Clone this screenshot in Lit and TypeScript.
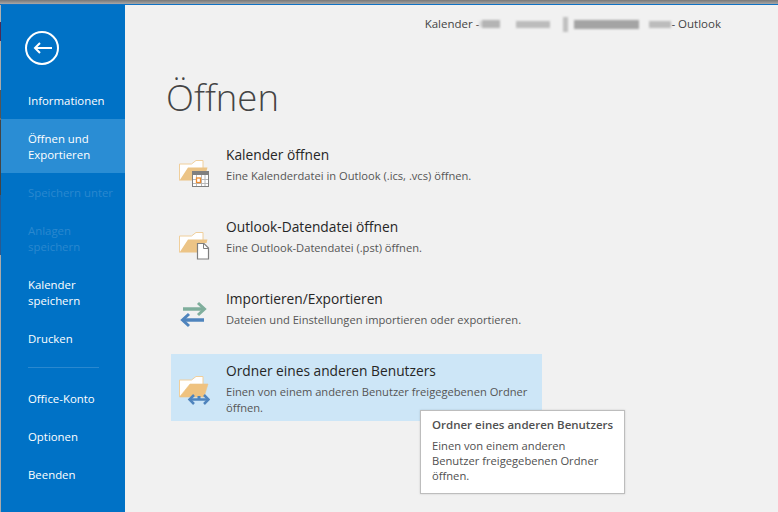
import { LitElement, html, css } from "lit";
import { customElement } from "lit/decorators.js";

const backBase = (tabRight = 25) => `M1.5 23.5V7H13.5L18 3.5H${tabRight}V11`;

const icons = {
  cal: html`<svg class="ico" viewBox="0 0 32 32" width="32" height="32">
    <path d=${backBase()} fill="#fff" stroke="#f0cf9c"/>
    <path d="M1.500 23.500L10 10.500H29.500L28.500 14H15V23.500Z" fill="#ecc486"/>
    <rect x="14.500" y="14.500" width="16" height="15" fill="#fff" stroke="#7f7f7f"/>
    <rect x="14" y="14" width="17" height="4" fill="#7f7f7f"/>
    <path d="M15 22.500H30M15 26.500H30M18.500 18V29M23.500 18V29M27 18V29" stroke="#b8b8b8" fill="none"/>
    <rect x="18.500" y="21" width="4" height="4.500" fill="#fff" stroke="#ed8b2f" stroke-width="1.300"/>
  </svg>`,
  data: html`<svg class="ico" viewBox="0 0 32 32" width="32" height="32">
    <path d=${backBase()} fill="#fff" stroke="#f0cf9c"/>
    <path d="M1.500 23.500L10 10.500H29.500L28.500 14H19V23.500Z" fill="#ecc486"/>
    <path d="M19.500 14.500H26L30.500 19V30H19.500Z" fill="#fff" stroke="#7f7f7f" stroke-width="1.200"/>
    <path d="M25.500 14.500V19.500H30.500" fill="none" stroke="#7f7f7f"/>
  </svg>`,
  imp: html`<svg class="ico" viewBox="0 0 32 32" width="32" height="32">
    <path d="M5 8H26" stroke="#7fae9c" stroke-width="3.500" fill="none"/>
    <path d="M20 2L26.500 8L20 14" stroke="#7fae9c" stroke-width="3" fill="none"/>
    <path d="M26 19H5" stroke="#4f84bd" stroke-width="3.500" fill="none"/>
    <path d="M11 13L4.500 19L11 25" stroke="#4f84bd" stroke-width="3" fill="none"/>
  </svg>`,
  share: html`<svg class="ico" viewBox="0 0 32 32" width="32" height="32">
    <path d=${backBase()} fill="#fff" stroke="#f0cf9c"/>
    <path d="M1.500 24L12 11H30L26 24Z" fill="#efc27f" stroke="#e9c488" stroke-width=".6"/>
    <rect x="19.500" y="23" width="3" height="3" fill="#4f84bd"/>
    <path d="M13 26.500H29" stroke="#4f84bd" stroke-width="2.500" fill="none"/>
    <path d="M16 22L11.500 26.500L16 31M26 22L30.500 26.500L26 31" stroke="#4f84bd" stroke-width="2.500" fill="none"/>
  </svg>`,
};

const blurSegs = [
  { w: 3, h: 6, c: "#dadada", gap: 0 },
  { w: 18, h: 8, c: "#b4b4b4", gap: 16 },
  { w: 34, h: 7, c: "#bcbcbc", gap: 13 },
  { w: 5, h: 15, c: "#c0c0c0", gap: 6 },
  { w: 65, h: 9, c: "#a4a4a4", gap: 10 },
  { w: 22, h: 7, c: "#bcbcbc", gap: 0 },
];

@customElement("app-root")
export class AppRoot extends LitElement {
  static styles = css`
    :host { display: block; width: 778px; height: 512px; overflow: hidden; font-family: "Open Sans", "Noto Sans", sans-serif; position: relative; }
    .window { display: flex; flex-direction: column; height: 512px; }
    .topedge { height: 4px; background: linear-gradient(#777, #a8a8a8); flex: none; }
    .accent { height: 1px; background: #0f72c5; flex: none; }
    .main { flex: 1; display: flex; min-height: 0; }
    .strip { width: 1px; flex: none; background: linear-gradient(#b0b0b0 0 17px, #4a2a55 17px 36px, #aaa 36px 85px, #555 85px 113px, #8a6a50 113px 115px, #444 115px 190px, #2a5a90 190px 250px, #aaa 250px); }
    .sidebar { width: 124px; flex: none; background: #0072c6; color: #fff; font-size: 11.400px; box-sizing: border-box; padding-top: 25px; display: flex; flex-direction: column; }
    .back { width: 36px; height: 36px; margin: 0 0 0 23px; display: block; flex: none; }
    .nav { display: flex; flex-direction: column; margin-top: 16px; }
    .item { padding: 12px 4px 10px 27px; line-height: 16px; box-sizing: border-box; white-space: nowrap; }
    .item.first { padding-top: 11px; }
    .item.sel { background: #2a8dd4; }
    .item.dis { color: #2a88cf; }
    .sep { height: 1px; background: #2a88cf; margin: 10px 26px 11px 27px; }
    .content { flex: 1; background: #f1f1f1; display: flex; flex-direction: column; min-width: 0; }
    .title { align-self: flex-end; font-size: 11.500px; color: #444; margin: 11px 57px 0 0; line-height: 16px; display: flex; align-items: center; white-space: pre; }
    .blur { display: flex; align-items: center; width: 192px; height: 16px; filter: blur(1px); }
    .seg { display: block; flex: none; }
    h1 { font-weight: 300; font-family: "Open Sans", sans-serif; font-size: 36.500px; line-height: 48px; color: #444; margin: 41px 0 0 41px; }
    .list { display: flex; flex-direction: column; margin: 17px 0 0 46px; gap: 5px; width: 371px; }
    .row { display: flex; height: 67px; box-sizing: border-box; padding: 7px 8px 0 7px; gap: 16px; }
    .row.hot { background: #cde6f7; }
    .ico { flex: none; margin-top: 12px; }
    .txt { min-width: 0; }
    .name { font-size: 13.750px; line-height: 20px; color: #262626; }
    .desc { font-size: 11.150px; line-height: 16px; color: #555; margin-top: 3px; }
    .tip { position: absolute; left: 420px; top: 410px; width: 205px; height: 84px; box-sizing: border-box; background: #fff; border: 1px solid #bdbdbd; box-shadow: 0 0 2px rgba(0,0,0,.15); padding: 6px 10px 6px 11px; color: #505050; font-size: 11.200px; line-height: 15px; }
    .tip b { display: block; font-weight: 600; font-size: 11.500px; margin-bottom: 5px; line-height: 16px; }
  `;

  render() {
    const rows = [
      { i: icons.cal, n: "Kalender öffnen", d: "Eine Kalenderdatei in Outlook (.ics, .vcs) öffnen." },
      { i: icons.data, n: "Outlook-Datendatei öffnen", d: "Eine Outlook-Datendatei (.pst) öffnen." },
      { i: icons.imp, n: "Importieren/Exportieren", d: "Dateien und Einstellungen importieren oder exportieren." },
      { i: icons.share, n: "Ordner eines anderen Benutzers", d: "Einen von einem anderen Benutzer freigegebenen Ordner öffnen.", hot: true },
    ];
    return html`
      <div class="window">
        <div class="topedge"></div>
        <div class="accent"></div>
        <div class="main">
          <div class="strip"></div>
          <nav class="sidebar">
            <svg class="back" viewBox="0 0 36 36" fill="none" stroke="#fff">
              <circle cx="18" cy="18" r="16" stroke-width="2"/>
              <path d="M28 18H11M16 13L11 18L16 23" stroke-width="2"/>
            </svg>
            <div class="nav">
              <div class="item first">Informationen</div>
              <div class="item sel">Öffnen und<br />Exportieren</div>
              <div class="item dis">Speichern unter</div>
              <div class="item dis">Anlagen<br />speichern</div>
              <div class="item">Kalender<br />speichern</div>
              <div class="item">Drucken</div>
              <div class="sep"></div>
              <div class="item">Office-Konto</div>
              <div class="item">Optionen</div>
              <div class="item">Beenden</div>
            </div>
          </nav>
          <section class="content">
            <div class="title">Kalender -<span class="blur">${blurSegs.map(
              (s) => html`<span class="seg" style="width:${s.w}px;height:${s.h}px;background:${s.c};margin-right:${s.gap}px"></span>`
            )}</span>- Outlook</div>
            <h1>Öffnen</h1>
            <div class="list">
              ${rows.map(
                (r) => html`<div class="row ${r.hot ? "hot" : ""}">
                  ${r.i}
                  <div class="txt">
                    <div class="name">${r.n}</div>
                    <div class="desc">${r.d}</div>
                  </div>
                </div>`
              )}
            </div>
          </section>
        </div>
      </div>
      <div class="tip">
        <b>Ordner eines anderen Benutzers</b>
        Einen von einem anderen<br />Benutzer freigegebenen Ordner<br />öffnen.
      </div>
    `;
  }
}
